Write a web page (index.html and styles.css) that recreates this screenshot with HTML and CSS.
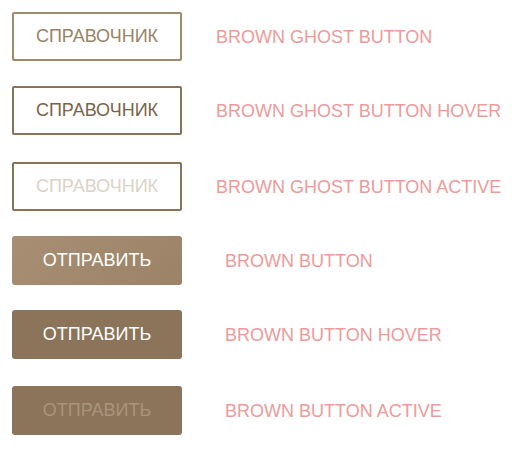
FILE: index.html
```html
<!DOCTYPE html>
<html lang="ru">
<head>
<meta charset="utf-8">
<link rel="stylesheet" href="styles.css">
</head>
<body>
<div class="page">
  <div class="row">
    <span class="btn ghost">Справочник</span>
    <span class="label">Brown ghost button</span>
  </div>
  <div class="row">
    <span class="btn ghost hover">Справочник</span>
    <span class="label">Brown ghost button hover</span>
  </div>
  <div class="row third">
    <span class="btn ghost active">Справочник</span>
    <span class="label">Brown ghost button active</span>
  </div>
  <div class="row">
    <span class="btn solid">Отправить</span>
    <span class="label wide">Brown button</span>
  </div>
  <div class="row">
    <span class="btn solid hover">Отправить</span>
    <span class="label wide">Brown button hover</span>
  </div>
  <div class="row third">
    <span class="btn solid active">Отправить</span>
    <span class="label wide">Brown button active</span>
  </div>
</div>
</body>
</html>
```
FILE: styles.css
```css
html, body {
  margin: 0;
  padding: 0;
  background: #ffffff;
}
body {
  font-family: Arial, "Liberation Sans", sans-serif;
}
.page {
  display: flex;
  flex-direction: column;
  gap: 25px;
  padding: 12px 0 0 12px;
}
.row {
  display: flex;
  align-items: center;
  height: 49px;
}
.row.third {
  margin-top: 2px;
}
.btn {
  box-sizing: border-box;
  width: 170px;
  height: 49px;
  display: flex;
  align-items: center;
  justify-content: center;
  text-transform: uppercase;
  font-size: 18px;
  border-radius: 2px;
}
.ghost {
  border: 2px solid #a08a6d;
  color: #9a8265;
  background: #fff;
}
.ghost.hover {
  border-color: #8a7256;
  color: #7a6448;
}
.ghost.active {
  border-color: #8a7256;
  color: #dcd2c8;
}
.solid {
  background: linear-gradient(135deg, #a88f74 0%, #9c8266 100%);
  color: #ffffff;
  border-radius: 3px;
}
.solid.hover {
  background: #8b745a;
}
.solid.active {
  background: #8b745a;
  color: #a8947d;
}
.label {
  margin-left: 34px;
  font-size: 18px;
  color: #ee9a9a;
  text-transform: uppercase;
  line-height: 1;
}
.label.wide {
  margin-left: 43px;
}
```
